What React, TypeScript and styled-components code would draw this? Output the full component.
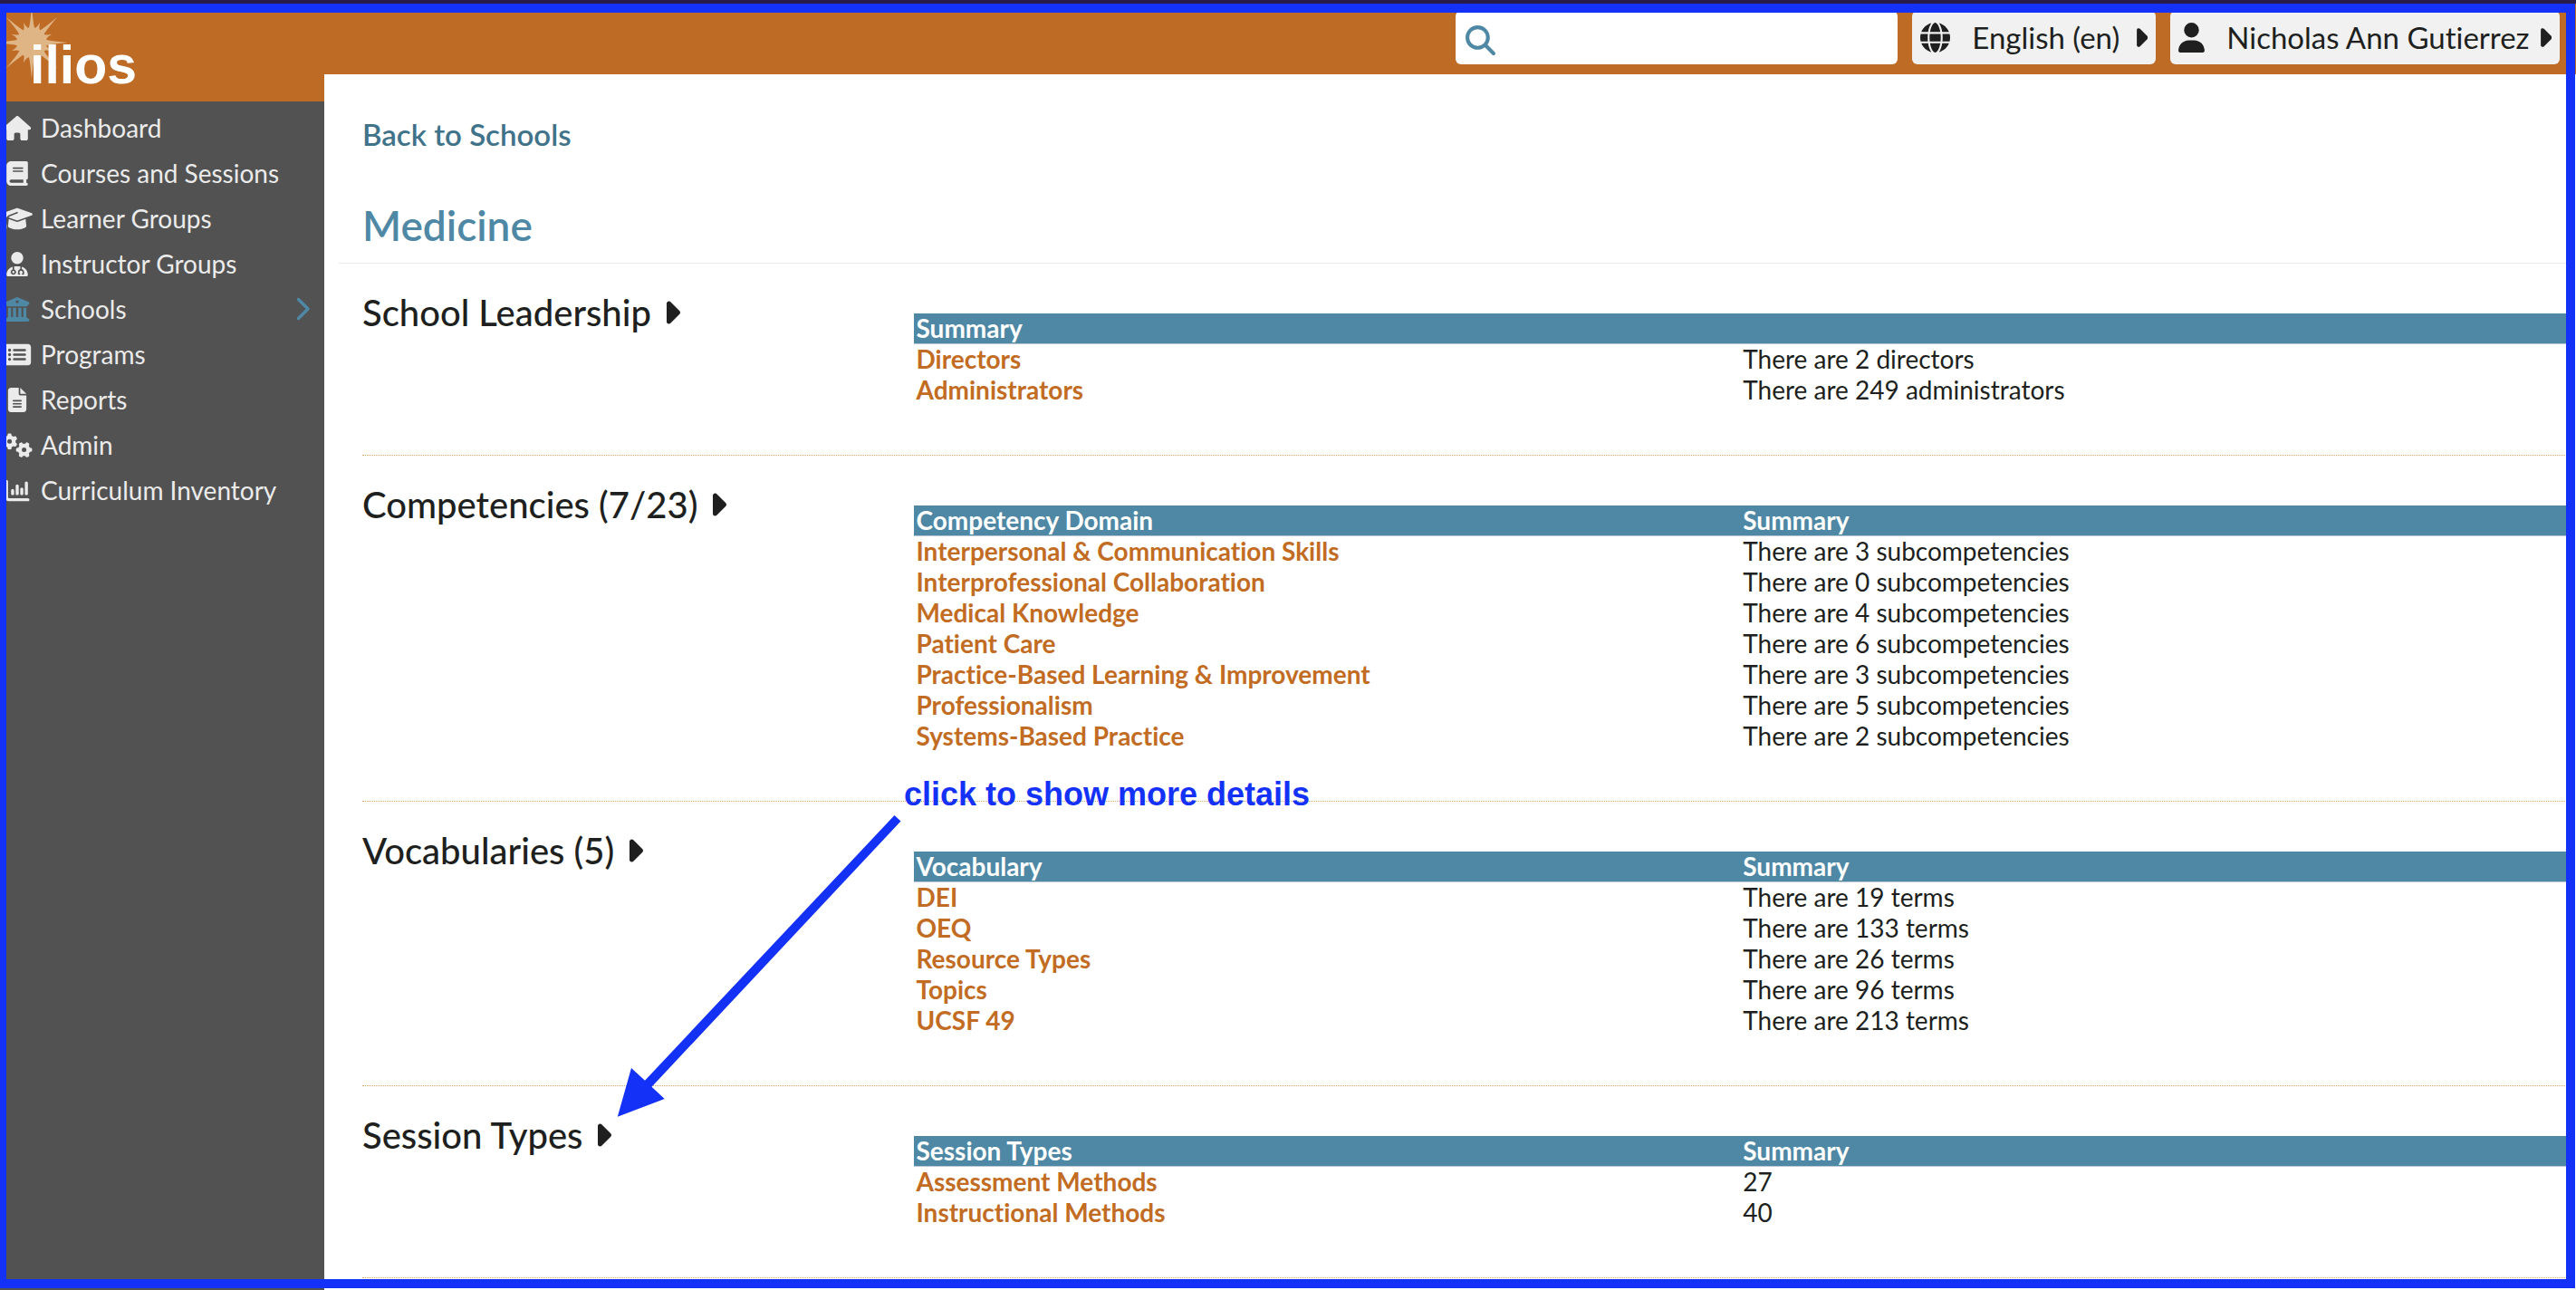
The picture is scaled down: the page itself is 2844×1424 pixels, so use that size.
import React from 'react';
import styled, { createGlobalStyle } from 'styled-components';
import {
  FaBook,
  FaBuildingColumns,
  FaCaretRight,
  FaChartColumn,
  FaChevronRight,
  FaFileLines,
  FaGears,
  FaGlobe,
  FaGraduationCap,
  FaHouse,
  FaMagnifyingGlass,
  FaRectangleList,
  FaUser,
  FaUserDoctor,
} from 'react-icons/fa6';

const color = {
  orange: '#be6b26',
  link: '#c26c23',
  teal: '#4e88a5',
  tealDark: '#407389',
  sidebar: '#525252',
  sidebarText: '#ebebeb',
  ink: '#201f20',
  control: '#f1f1f2',
  annotation: '#1431f8',
};

const GlobalStyle = createGlobalStyle`
  *, *::before, *::after { box-sizing: border-box; }
  body {
    margin: 0;
    background: #fff;
    color: ${color.ink};
    font-family: Lato, 'Open Sans', sans-serif;
    font-variant-ligatures: none;
  }
  h1, h2 { margin: 0; }
  button, input { font: inherit; color: inherit; }
`;

const Page = styled.div`
  position: relative;
  display: flex;
  flex-direction: column;
  min-height: 100vh;
`;

const WindowEdge = styled.div`
  height: 4px;
  background: #281c4a;
`;

const Shell = styled.div`
  flex: 1;
  display: grid;
  grid-template-columns: 358px minmax(0, 1fr);
`;

const Sidebar = styled.aside`
  background: ${color.sidebar};
  color: ${color.sidebarText};
`;

const LogoLink = styled.a`
  display: grid;
  height: 108px;
  background: ${color.orange};
  color: #fff;
  text-decoration: none;
  overflow: hidden;
  & > * { grid-area: 1 / 1; }
`;

const Wordmark = styled.span`
  padding: 34px 0 0 33px;
  font: bold 59px/68px 'Liberation Sans', Arial, sans-serif;
`;

const NavList = styled.ul`
  margin: 0;
  padding: 4px 0 0 2px;
  list-style: none;
`;

const NavLink = styled.a`
  display: flex;
  align-items: center;
  gap: 9px;
  height: 50px;
  padding-right: 16px;
  color: inherit;
  font-size: 28px;
  text-decoration: none;
`;

const NavIcon = styled.span<{ $active?: boolean }>`
  display: flex;
  color: ${(p) => (p.$active ? color.teal : 'inherit')};
  svg {
    width: 34px;
    height: 27px;
  }
`;

const NavLabel = styled.span`
  flex: 1;
`;

const ActiveMark = styled(FaChevronRight)`
  width: 18px;
  height: 28px;
  color: ${color.teal};
`;

const Caret = styled(FaCaretRight)`
  flex: none;
  width: 0.5em;
`;

const PersonIcon = styled(FaUser)`
  width: 29px;
`;

const TopBar = styled.header`
  display: flex;
  justify-content: flex-end;
  gap: 16px;
  height: 78px;
  padding: 8px 18px 11px 0;
  background: ${color.orange};
`;

const SearchBox = styled.label`
  display: flex;
  align-items: center;
  gap: 12px;
  width: 488px;
  padding: 6px 11px 0;
  border-radius: 6px;
  background: #fff;
  color: ${color.teal};
  font-size: 33px;
`;

const SearchInput = styled.input`
  flex: 1;
  min-width: 0;
  border: 0;
  outline: 0;
  background: none;
  color: ${color.ink};
`;

const MenuButton = styled.button`
  display: flex;
  align-items: center;
  min-width: 269px;
  padding: 0 9px;
  border: 0;
  border-radius: 6px;
  background: ${color.control};
  font-size: 33px;
  white-space: nowrap;
`;

const MenuLabel = styled.span`
  flex: 1;
  padding: 0 8px 2px 24px;
  text-align: left;
`;

const Content = styled.main`
  padding: 46px 10px 0 16px;
`;

const BackLink = styled.a`
  display: block;
  width: fit-content;
  margin: 0 0 53px 26px;
  color: ${color.tealDark};
  font-size: 33px;
  font-weight: 600;
  line-height: 40px;
  text-decoration: none;
`;

const SchoolTitle = styled.h1`
  padding: 0 26px 13px;
  border-bottom: 1px solid #e9ebeb;
  color: ${color.teal};
  font-size: 46px;
  font-weight: 600;
  line-height: 56px;
`;

const Section = styled.section`
  display: grid;
  grid-template-columns: minmax(0, 1fr) minmax(0, 3fr);
  margin-left: 26px;
  border-bottom: 1px dotted #d9a467;
`;

const SectionHeading = styled.h2`
  padding-top: 30px;
  font-size: 40px;
  font-weight: 500;
  line-height: 48px;
`;

const SectionToggle = styled.button`
  display: flex;
  align-items: center;
  gap: 12px;
  padding: 0;
  border: 0;
  background: none;
`;

const SummaryTable = styled.table`
  width: 100%;
  margin: 55px 0 54px;
  border-collapse: separate;
  border-spacing: 0;
  table-layout: fixed;
  font-size: 28px;
  line-height: 32px;
  text-align: left;
`;

const ColumnHead = styled.th`
  padding: 0 3px 1px;
  border-bottom: 1px solid #b9c6d3;
  background: ${color.teal};
  color: #fff;
`;

const RowHead = styled.th`
  padding: 0 3px 2px;
  color: ${color.link};
`;

const Cell = styled.td`
  padding: 0 3px 2px;
`;

const Frame = styled.div`
  position: absolute;
  inset: 4px 1px 2px 0;
  border: 10px solid ${color.annotation};
  border-left-width: 7px;
  pointer-events: none;
`;

const Callout = styled.p`
  position: absolute;
  top: 856px;
  left: 998px;
  margin: 0;
  color: ${color.annotation};
  font: bold 36px/42px 'Liberation Sans', Arial, sans-serif;
  white-space: nowrap;
`;

const Arrow = styled.svg`
  position: absolute;
  top: 896px;
  left: 680px;
  width: 320px;
  height: 340px;
  pointer-events: none;
`;

/** Sixteen-pointed burst: long rays every 45 degrees, short ones between. */
function burstPath(cx: number, cy: number) {
  const at = (deg: number, r: number) => {
    const a = (deg * Math.PI) / 180;
    return `${(cx + r * Math.cos(a)).toFixed(1)} ${(cy + r * Math.sin(a)).toFixed(1)}`;
  };
  let d = `M${at(-11.25, 16.5)}`;
  for (let i = 0; i < 16; i++) {
    const deg = i * 22.5;
    const long = i % 2 === 0;
    const bend = long ? 5 : 4;
    const pull = long ? 20 : 17;
    d += `Q${at(deg - bend, pull)} ${at(deg, long ? 40 : 24)}`;
    d += `Q${at(deg + bend, pull)} ${at(deg + 11.25, 16.5)}`;
  }
  return `${d}Z`;
}

const navItems = [
  { label: 'Dashboard', Icon: FaHouse },
  { label: 'Courses and Sessions', Icon: FaBook },
  { label: 'Learner Groups', Icon: FaGraduationCap },
  { label: 'Instructor Groups', Icon: FaUserDoctor },
  { label: 'Schools', Icon: FaBuildingColumns, active: true },
  { label: 'Programs', Icon: FaRectangleList },
  { label: 'Reports', Icon: FaFileLines },
  { label: 'Admin', Icon: FaGears },
  { label: 'Curriculum Inventory', Icon: FaChartColumn },
];

const sections = [
  {
    title: 'School Leadership',
    head: ['Summary'],
    rows: [
      ['Directors', 'There are 2 directors'],
      ['Administrators', 'There are 249 administrators'],
    ],
  },
  {
    title: 'Competencies (7/23)',
    head: ['Competency Domain', 'Summary'],
    rows: [
      ['Interpersonal & Communication Skills', 'There are 3 subcompetencies'],
      ['Interprofessional Collaboration', 'There are 0 subcompetencies'],
      ['Medical Knowledge', 'There are 4 subcompetencies'],
      ['Patient Care', 'There are 6 subcompetencies'],
      ['Practice-Based Learning & Improvement', 'There are 3 subcompetencies'],
      ['Professionalism', 'There are 5 subcompetencies'],
      ['Systems-Based Practice', 'There are 2 subcompetencies'],
    ],
  },
  {
    title: 'Vocabularies (5)',
    head: ['Vocabulary', 'Summary'],
    rows: [
      ['DEI', 'There are 19 terms'],
      ['OEQ', 'There are 133 terms'],
      ['Resource Types', 'There are 26 terms'],
      ['Topics', 'There are 96 terms'],
      ['UCSF 49', 'There are 213 terms'],
    ],
  },
  {
    title: 'Session Types',
    head: ['Session Types', 'Summary'],
    rows: [
      ['Assessment Methods', '27'],
      ['Instructional Methods', '40'],
    ],
  },
];

export default function App() {
  return (
    <Page>
      <GlobalStyle />
      <WindowEdge />
      <Shell>
        <Sidebar>
          <LogoLink href="#">
            <svg width="90" height="90" aria-hidden="true">
              <path d={burstPath(35, 43)} fill="#dfb586" />
            </svg>
            <Wordmark>ilios</Wordmark>
          </LogoLink>
          <nav>
            <NavList>
              {navItems.map(({ label, Icon, active }) => (
                <li key={label}>
                  <NavLink href="#" aria-current={active ? 'page' : undefined}>
                    <NavIcon $active={active}>
                      <Icon />
                    </NavIcon>
                    <NavLabel>{label}</NavLabel>
                    {active && <ActiveMark />}
                  </NavLink>
                </li>
              ))}
            </NavList>
          </nav>
        </Sidebar>
        <div>
          <TopBar>
            <SearchBox>
              <FaMagnifyingGlass />
              <SearchInput type="search" aria-label="Search" />
            </SearchBox>
            <MenuButton type="button">
              <FaGlobe />
              <MenuLabel>English (en)</MenuLabel>
              <Caret />
            </MenuButton>
            <MenuButton type="button">
              <PersonIcon />
              <MenuLabel>Nicholas Ann Gutierrez</MenuLabel>
              <Caret />
            </MenuButton>
          </TopBar>
          <Content>
            <BackLink href="#">Back to Schools</BackLink>
            <SchoolTitle>Medicine</SchoolTitle>
            {sections.map(({ title, head, rows }) => (
              <Section key={title}>
                <SectionHeading>
                  <SectionToggle type="button" aria-expanded={false}>
                    {title}
                    <Caret />
                  </SectionToggle>
                </SectionHeading>
                <SummaryTable>
                  <thead>
                    <tr>
                      {head.map((h) => (
                        <ColumnHead key={h} scope="col" colSpan={head.length === 1 ? 2 : 1}>
                          {h}
                        </ColumnHead>
                      ))}
                    </tr>
                  </thead>
                  <tbody>
                    {rows.map(([name, summary]) => (
                      <tr key={name}>
                        <RowHead scope="row">{name}</RowHead>
                        <Cell>{summary}</Cell>
                      </tr>
                    ))}
                  </tbody>
                </SummaryTable>
              </Section>
            ))}
          </Content>
        </div>
      </Shell>
      <Frame />
      <Callout>click to show more details</Callout>
      <Arrow viewBox="0 0 320 340" aria-hidden="true">
        <path
          d="M307.5 4L314.5 10.5L39.5 303.7L53.7 317L1.8 336.7L17 283L32 296.7Z"
          fill={color.annotation}
        />
      </Arrow>
    </Page>
  );
}
